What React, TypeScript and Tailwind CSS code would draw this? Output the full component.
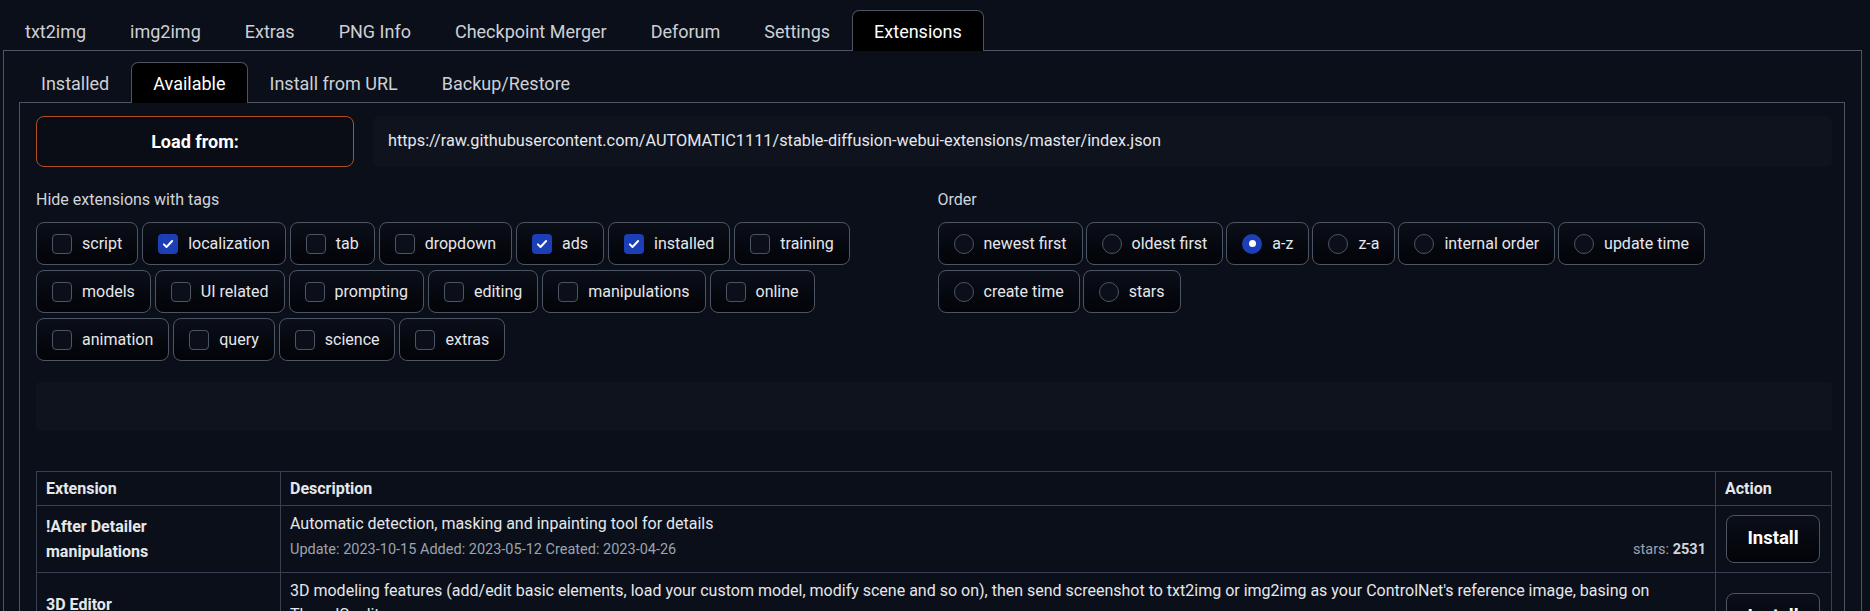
import { useState } from 'react';

const topTabs = ['txt2img', 'img2img', 'Extras', 'PNG Info', 'Checkpoint Merger', 'Deforum', 'Settings', 'Extensions'];
const subTabs = ['Installed', 'Available', 'Install from URL', 'Backup/Restore'];

const tags = [
  { name: 'script', checked: false },
  { name: 'localization', checked: true },
  { name: 'tab', checked: false },
  { name: 'dropdown', checked: false },
  { name: 'ads', checked: true },
  { name: 'installed', checked: true },
  { name: 'training', checked: false },
  { name: 'models', checked: false },
  { name: 'UI related', checked: false },
  { name: 'prompting', checked: false },
  { name: 'editing', checked: false },
  { name: 'manipulations', checked: false },
  { name: 'online', checked: false },
  { name: 'animation', checked: false },
  { name: 'query', checked: false },
  { name: 'science', checked: false },
  { name: 'extras', checked: false },
];

const orders = ['newest first', 'oldest first', 'a-z', 'z-a', 'internal order', 'update time', 'create time', 'stars'];

const extensions = [
  {
    name: '!After Detailer',
    tags: 'manipulations',
    description: 'Automatic detection, masking and inpainting tool for details',
    dates: 'Update: 2023-10-15 Added: 2023-05-12 Created: 2023-04-26',
    stars: 2531,
  },
  {
    name: '3D Editor',
    tags: 'tab',
    description:
      "3D modeling features (add/edit basic elements, load your custom model, modify scene and so on), then send screenshot to txt2img or img2img as your ControlNet's reference image, basing on ThreeJS editor.",
    dates: 'Update: 2023-09-28 Added: 2023-04-20 Created: 2023-04-19',
    stars: 1457,
  },
];

function Tab({ label, selected }: { label: string; selected: boolean }) {
  return (
    <div
      className={
        'h-[41px] px-[21px] flex items-center text-[18px] border border-b-0 rounded-t-[7px] -mb-px relative ' +
        (selected ? 'bg-black border-[#4b5563] text-white z-10' : 'border-transparent text-[#cdd0d6]')
      }
    >
      {label}
    </div>
  );
}

function CheckChip({ name, checked }: { name: string; checked: boolean }) {
  return (
    <label className="h-[43px] px-[15px] flex items-center gap-[10px] rounded-[8px] border border-[#4b5563] bg-gradient-to-b from-[#0b0f19] to-[#030408] text-[16px] text-[#e5e7eb]">
      {checked ? (
        <span className="w-[20px] h-[20px] rounded-[4px] bg-[#1c3fb7] flex items-center justify-center">
          <svg width="12" height="12" viewBox="0 0 16 16">
            <path d="M2.5 8.5l3.5 3.5 7.5-8" stroke="white" strokeWidth="2.6" fill="none" strokeLinecap="round" strokeLinejoin="round" />
          </svg>
        </span>
      ) : (
        <span className="w-[20px] h-[20px] rounded-[4px] border border-[#4b5563] bg-[#0b0f19]" />
      )}
      {name}
    </label>
  );
}

function RadioChip({ name, checked }: { name: string; checked: boolean }) {
  return (
    <label className="h-[43px] px-[15px] flex items-center gap-[10px] rounded-[8px] border border-[#4b5563] bg-gradient-to-b from-[#0b0f19] to-[#030408] text-[16px] text-[#e5e7eb]">
      {checked ? (
        <span className="w-[20px] h-[20px] rounded-full bg-[#1c3fb7] flex items-center justify-center">
          <span className="w-[7px] h-[7px] rounded-full bg-white" />
        </span>
      ) : (
        <span className="w-[20px] h-[20px] rounded-full border border-[#4b5563] bg-[#0b0f19]" />
      )}
      {name}
    </label>
  );
}

export default function App() {
  const [order] = useState('a-z');

  return (
    <div className="w-[1870px] h-[611px] overflow-hidden bg-[#0b0f19] text-[#e5e7eb] font-['Roboto',sans-serif] pl-[3px] pr-[8px] pt-[10px]">
      <div className="flex">
        {topTabs.map((t) => (
          <Tab key={t} label={t} selected={t === 'Extensions'} />
        ))}
      </div>

      <div className="border border-[#4b5563] pl-[15px] pr-[16px] pt-[11px] h-[700px]">
        <div className="flex">
          {subTabs.map((t) => (
            <Tab key={t} label={t} selected={t === 'Available'} />
          ))}
        </div>

        <div className="border border-[#4b5563] pl-[16px] pr-[12px] pt-[13px] h-[700px]">
          <div className="flex gap-[19px] h-[51px]">
            <button className="w-[318px] shrink-0 rounded-[8px] border border-[#b4501f] bg-[#0a0d15] text-[18px] font-bold text-white">
              Load from:
            </button>
            <div className="flex-1 rounded-[6px] bg-[#0e131e] px-[15px] flex items-center text-[16.3px] text-[#e5e7eb]">
              https://raw.githubusercontent.com/AUTOMATIC1111/stable-diffusion-webui-extensions/master/index.json
            </div>
          </div>

          <div className="grid grid-cols-2 gap-x-[7px] mt-[21px]">
            <div>
              <div className="text-[16px] leading-[24px] text-[#d1d5db]">Hide extensions with tags</div>
              <div className="flex flex-wrap gap-x-[4px] gap-y-[5px] mt-[10px]">
                {tags.map((t) => (
                  <CheckChip key={t.name} name={t.name} checked={t.checked} />
                ))}
              </div>
            </div>
            <div>
              <div className="text-[16px] leading-[24px] text-[#d1d5db]">Order</div>
              <div className="flex flex-wrap gap-x-[3px] gap-y-[5px] mt-[10px]">
                {orders.map((o) => (
                  <RadioChip key={o} name={o} checked={o === order} />
                ))}
              </div>
            </div>
          </div>

          <div className="mt-[21px] h-[49px] rounded-[4px] bg-[#0e131e]" />

          <table className="mt-[40px] w-full border-collapse text-[16px] text-[#e5e7eb]">
            <colgroup>
              <col className="w-[244px]" />
              <col />
              <col className="w-[116px]" />
            </colgroup>
            <thead>
              <tr className="h-[34px]">
                <th className="border border-[#374151] px-[9px] text-left font-bold">Extension</th>
                <th className="border border-[#374151] px-[9px] text-left font-bold">Description</th>
                <th className="border border-[#374151] px-[9px] text-left font-bold">Action</th>
              </tr>
            </thead>
            <tbody>
              {extensions.map((e) => (
                <tr key={e.name}>
                  <td className="border border-[#374151] px-[9px] align-middle font-bold leading-[25px]">
                    {e.name}
                    <br />
                    {e.tags}
                  </td>
                  <td className="border border-[#374151] px-[9px] pt-[6px] pb-[8px] align-top">
                    <div className="leading-[24px]">{e.description}</div>
                    <div className="flex justify-between mt-[2px] leading-[24px] text-[14.5px] text-[#9ca3af]">
                      <span>{e.dates}</span>
                      <span>
                        stars: <b className="text-[#d1d5db]">{e.stars}</b>
                      </span>
                    </div>
                  </td>
                  <td className="border border-[#374151] px-[10px] py-[9px] align-middle">
                    <button className="w-[94px] h-[48px] rounded-[8px] border border-[#4b5563] bg-gradient-to-b from-[#0b0f19] to-[#030408] text-[18.5px] font-bold text-white">
                      Install
                    </button>
                  </td>
                </tr>
              ))}
            </tbody>
          </table>
        </div>
      </div>
    </div>
  );
}
